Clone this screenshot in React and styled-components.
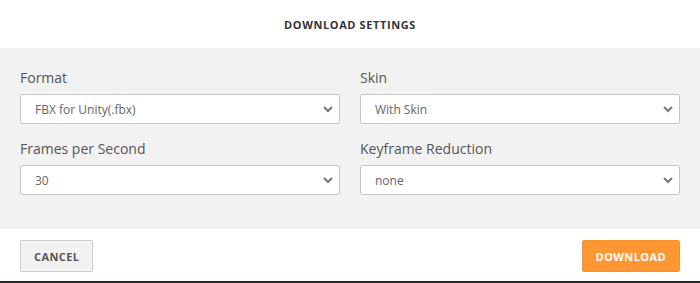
import React from "react";
import styled, { createGlobalStyle } from "styled-components";

const Global = createGlobalStyle`
  html, body { margin: 0; padding: 0; background: #2b2626; }
  body { font-family: "Open Sans", "Noto Sans", sans-serif; }
  * { box-sizing: border-box; }
`;

const Dialog = styled.div`
  width: 700px;
  display: flex;
  flex-direction: column;
  background: #fff;
`;

const Header = styled.div`
  height: 48px;
  display: flex;
  align-items: center;
  justify-content: center;
  background: #fff;
`;

const Title = styled.h1`
  margin: 0;
  font-size: 11px;
  font-weight: 700;
  letter-spacing: 0.6px;
  color: #333;
`;

const Body = styled.div`
  background: #f2f2f2;
  height: 181px;
  padding: 20px 20px 0;
  display: grid;
  grid-template-columns: 1fr 1fr;
  column-gap: 20px;
  row-gap: 15px;
  align-content: start;
`;

const Field = styled.div`
  display: flex;
  flex-direction: column;
  gap: 6px;
`;

const Label = styled.label`
  font-size: 14px;
  line-height: 20px;
  color: #555;
`;

const SelectWrap = styled.div`
  position: relative;
  height: 30px;
`;

const Select = styled.select`
  appearance: none;
  -webkit-appearance: none;
  width: 100%;
  height: 30px;
  border: 1px solid #c8c8c8;
  border-radius: 2px;
  background: #fff;
  padding: 0 30px 0 14px;
  font-family: "Open Sans", "Noto Sans", sans-serif;
  font-size: 12px;
  color: #666;
  outline: none;
`;

const Chevron = styled.svg`
  position: absolute;
  right: 6px;
  top: 11px;
  pointer-events: none;
`;

const Footer = styled.div`
  height: 52px;
  background: #fff;
  padding: 11px 20px 0;
  display: flex;
  justify-content: space-between;
  align-items: flex-start;
`;

const Button = styled.button`
  height: 32px;
  padding: 0 13px;
  border-radius: 2px;
  border: 1px solid ${(p) => (p.$primary ? "#f7912a" : "#cfcfcf")};
  background: ${(p) => (p.$primary ? "#fd9733" : "#f2f2f2")};
  color: ${(p) => (p.$primary ? "#fff" : "#555")};
  font-family: "Open Sans", "Noto Sans", sans-serif;
  font-size: 11px;
  font-weight: 700;
  letter-spacing: 0.4px;
  cursor: pointer;
`;

const fields = [
  { label: "Format", value: "FBX for Unity(.fbx)" },
  { label: "Skin", value: "With Skin" },
  { label: "Frames per Second", value: "30" },
  { label: "Keyframe Reduction", value: "none" },
];

function SelectField({ label, value }) {
  return (
    <Field>
      <Label>{label}</Label>
      <SelectWrap>
        <Select defaultValue={value}>
          <option value={value}>{value}</option>
        </Select>
        <Chevron width="12" height="8" viewBox="0 0 12 8">
          <path d="M2 2 L6 6 L10 2" fill="none" stroke="#777" strokeWidth="2" />
        </Chevron>
      </SelectWrap>
    </Field>
  );
}

export default function App() {
  return (
    <>
      <Global />
      <Dialog>
        <Header>
          <Title>DOWNLOAD SETTINGS</Title>
        </Header>
        <Body>
          {fields.map((f) => (
            <SelectField key={f.label} {...f} />
          ))}
        </Body>
        <Footer>
          <Button>CANCEL</Button>
          <Button $primary>DOWNLOAD</Button>
        </Footer>
      </Dialog>
    </>
  );
}
